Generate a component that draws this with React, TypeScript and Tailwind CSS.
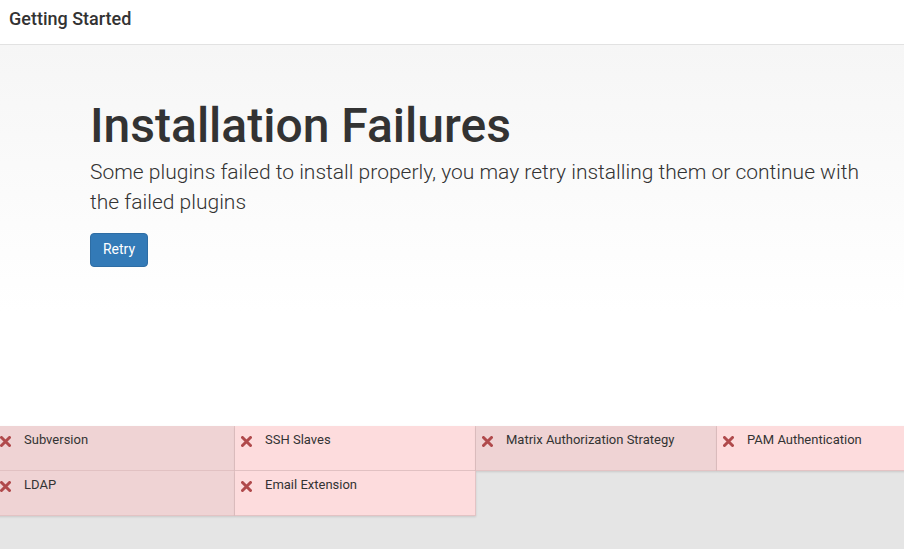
const failed = [
  { name: "Subversion", dark: true },
  { name: "SSH Slaves", dark: false },
  { name: "Matrix Authorization Strategy", dark: true },
  { name: "PAM Authentication", dark: false },
  { name: "LDAP", dark: true },
  { name: "Email Extension", dark: false },
];

function Cross() {
  return (
    <svg width="11" height="11" viewBox="0 0 11 11" className="shrink-0">
      <path d="M1.5 1.5 L9.5 9.5 M9.5 1.5 L1.5 9.5" stroke="#b04a4c" strokeWidth="3" strokeLinecap="round" />
    </svg>
  );
}

export default function App() {
  return (
    <div className="w-[904px] h-[549px] overflow-hidden bg-white text-[#333] font-['Roboto',sans-serif]">
      {/* header */}
      <div className="h-[45px] border-b border-[#e2e2e2] flex items-center px-[9px]">
        <h1 className="text-[18px] font-medium text-[#333] -mt-[8px]">Getting Started</h1>
      </div>

      {/* jumbotron */}
      <div className="h-[381px] bg-gradient-to-b from-[#f6f6f6] to-white to-[70%] pl-[90px] pt-[55px]">
        <h2 className="text-[48px] font-medium leading-[1.1] text-[#333]">Installation Failures</h2>
        <p className="text-[21px] font-light leading-[30px] text-[#333] mt-[4px] w-[790px]">
          Some plugins failed to install properly, you may retry installing them or continue with the failed plugins
        </p>
        <button className="mt-[16px] w-[58px] h-[34px] rounded-[4px] bg-[#337ab7] border border-[#2e6da4] text-white text-[14px]">
          Retry
        </button>
      </div>

      {/* plugin list */}
      <div className="h-[123px] bg-[#e5e5e5]">
        <div className="-ml-[6px] w-[966px] flex flex-wrap">
          {failed.map((p) => (
            <div
              key={p.name}
              className={`w-[241px] h-[45px] flex items-start gap-[13px] pl-[6px] pt-[6px] border-r border-b border-[#e3c3c4] shadow-[0_1px_2px_rgba(0,0,0,0.12)] ${
                p.dark ? "bg-[#efd3d4]" : "bg-[#fddcdd]"
              }`}
            >
              <div className="pt-[4px]">
                <Cross />
              </div>
              <span className="text-[13px] text-[#333] leading-[16px]">{p.name}</span>
            </div>
          ))}
        </div>
      </div>
    </div>
  );
}
